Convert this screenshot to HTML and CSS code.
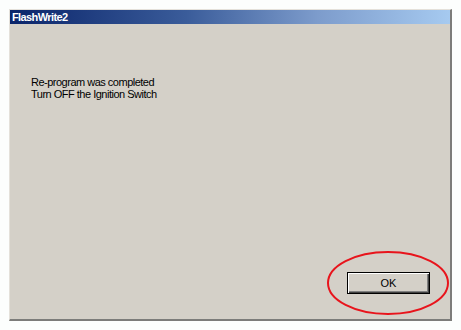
FILE: index.html
```html
<!DOCTYPE html>
<html>
<head>
<meta charset="utf-8">
<link rel="stylesheet" href="styles.css">
</head>
<body>
<div class="window">
  <div class="titlebar"><span class="title">FlashWrite2</span></div>
  <div class="client">
    <div class="message">
      <div>Re-program was completed</div>
      <div>Turn OFF the Ignition Switch</div>
    </div>
    <button class="btn">OK</button>
  </div>
</div>
<svg class="mark" width="124" height="66" viewBox="0 0 124 66">
  <ellipse cx="62" cy="33" rx="60" ry="31" fill="none" stroke="#e8141c" stroke-width="2"/>
</svg>
</body>
</html>
```
FILE: styles.css
```css
html, body {
  margin: 0;
  padding: 0;
  background: #fcfefd;
}
body {
  position: relative;
  width: 461px;
  height: 330px;
  overflow: hidden;
  font-family: "Liberation Sans", Arial, sans-serif;
}
.window {
  margin: 9px 0 0 9px;
  width: 443px;
  height: 312px;
  box-sizing: border-box;
  border-top: 1px solid #e4e1da;
  border-left: 1px solid #e4e1da;
  border-right: 2px solid #7c7c7a;
  border-bottom: 2px solid #7c7c7a;
  background: #d4d0c8;
  display: flex;
  flex-direction: column;
}
.titlebar {
  height: 14px;
  background: linear-gradient(to right, #0a246a 0%, #3a5c9a 40%, #7d9ccc 70%, #a6caf0 100%);
  display: flex;
  align-items: center;
  padding-left: 2px;
}
.title {
  color: #ffffff;
  font-weight: bold;
  font-size: 11px;
  letter-spacing: -0.6px;
  line-height: 14px;
}
.client {
  flex: 1;
  display: flex;
  flex-direction: column;
  justify-content: space-between;
  padding: 52px 20px 25px 21px;
}
.message {
  font-size: 11px;
  letter-spacing: -0.5px;
  line-height: 12px;
  color: #000;
}
.btn {
  align-self: flex-end;
  width: 83px;
  height: 22px;
  margin: 0;
  padding: 0;
  background: #d4d0c8;
  font-family: "Liberation Sans", Arial, sans-serif;
  font-size: 11px;
  color: #000;
  border: 1px solid #000;
  box-shadow: inset 1px 1px 0 #ffffff, inset -1px -1px 0 #404040, inset -2px -2px 0 #808080;
}
.mark {
  position: absolute;
  left: 326px;
  top: 250px;
}
```
